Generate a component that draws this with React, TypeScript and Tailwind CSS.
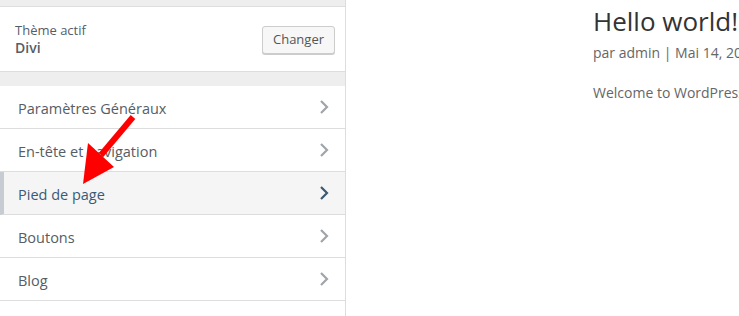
const items = [
  { label: "Paramètres Généraux" },
  { label: "En-tête et navigation" },
  { label: "Pied de page", active: true },
  { label: "Boutons" },
  { label: "Blog" },
];

const Chevron = ({ className }: { className: string }) => (
  <svg width="10" height="16" viewBox="0 0 10 16" className={className}>
    <path d="M2 2 L8 8 L2 14" fill="none" stroke="currentColor" strokeWidth="2.2" />
  </svg>
);

const App = () => {
  return (
    <div className="relative flex w-[739px] h-[316px] overflow-hidden bg-white font-['Open_Sans',sans-serif]">
      {/* sidebar */}
      <aside className="w-[346px] shrink-0 flex flex-col bg-[#eeeeee] border-r border-[#dddddd]">
        <div className="h-[7px] border-b border-[#dddddd]" />
        <div className="h-[65px] bg-white border-b border-[#dddddd] flex items-center justify-between pl-[15px] pr-[10px]">
          <div className="flex flex-col leading-[17px] pb-[1px]">
            <span className="text-[13px] text-[#555d66]">Thème actif</span>
            <span className="text-[14px] font-semibold text-[#555d66]">Divi</span>
          </div>
          <button className="h-[28px] w-[73px] mt-[2px] rounded-[3px] border border-[#cccccc] bg-[#f7f7f7] shadow-[0_1px_0_#cccccc] text-[13px] text-[#555555]">
            Changer
          </button>
        </div>
        <div className="h-[14px]" />
        <ul className="flex-1 bg-white">
          {items.map((it) => (
            <li
              key={it.label}
              className={
                it.active
                  ? "h-[43px] flex items-center justify-between border-b border-[#dddddd] border-l-4 border-l-[#c6ccd1] bg-[#f5f5f5] pl-[14px] pr-[16px] text-[#3b5a75]"
                  : "h-[43px] flex items-center justify-between border-b border-[#dddddd] pl-[18px] pr-[16px] text-[#555d66]"
              }
            >
              <span className="text-[14.5px] font-medium pt-[3px]">{it.label}</span>
              <Chevron className={it.active ? "text-[#3b5a75]" : "text-[#a0a5aa]"} />
            </li>
          ))}
        </ul>
      </aside>

      {/* preview */}
      <main className="flex-1 pl-[247px] pt-[4px] whitespace-nowrap">
        <h1 className="text-[26px] leading-[34px] text-[#333333]">Hello world!</h1>
        <p className="mt-[4px] text-[14px] text-[#666666]">par admin | Mai 14, 2019</p>
        <p className="mt-[19px] text-[14px] text-[#666666]">Welcome to WordPress. This is your first post.</p>
      </main>

      {/* annotation arrow */}
      <svg className="absolute left-0 top-0 pointer-events-none" width="739" height="316">
        <line x1="133" y1="117" x2="101" y2="155" stroke="#ff0000" strokeWidth="6" />
        <polygon points="88,143 114,167 83,184" fill="#ff0000" />
      </svg>
    </div>
  );
};

export default App;
